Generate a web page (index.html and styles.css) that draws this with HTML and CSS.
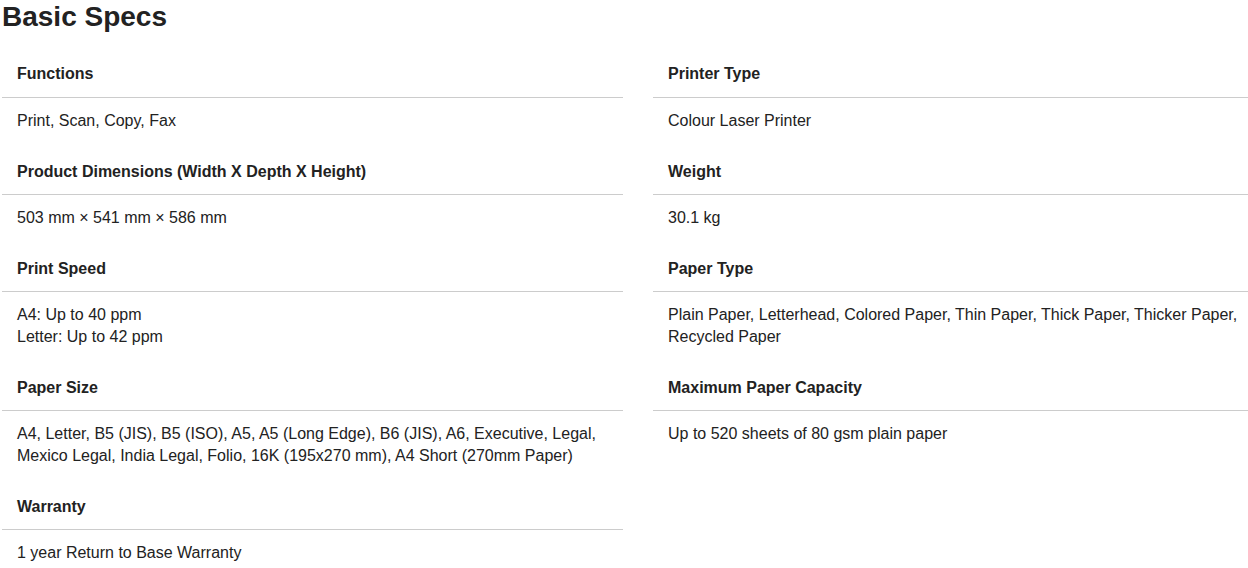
FILE: index.html
```html
<!DOCTYPE html>
<html lang="en">
<head>
<meta charset="utf-8">
<title>Basic Specs</title>
<link rel="stylesheet" href="styles.css">
</head>
<body>
<div class="page">
  <h2 class="title">Basic Specs</h2>
  <div class="specs">
    <div class="col">
      <div class="spec">
        <div class="label">Functions</div>
        <div class="value">Print, Scan, Copy, Fax</div>
      </div>
      <div class="spec">
        <div class="label">Product Dimensions (Width X Depth X Height)</div>
        <div class="value">503 mm × 541 mm × 586 mm</div>
      </div>
      <div class="spec">
        <div class="label">Print Speed</div>
        <div class="value">A4: Up to 40 ppm<br>Letter: Up to 42 ppm</div>
      </div>
      <div class="spec">
        <div class="label">Paper Size</div>
        <div class="value">A4, Letter, B5 (JIS), B5 (ISO), A5, A5 (Long Edge), B6 (JIS), A6, Executive, Legal, Mexico Legal, India Legal, Folio, 16K (195x270 mm), A4 Short (270mm Paper)</div>
      </div>
      <div class="spec">
        <div class="label">Warranty</div>
        <div class="value">1 year Return to Base Warranty</div>
      </div>
    </div>
    <div class="col">
      <div class="spec">
        <div class="label">Printer Type</div>
        <div class="value">Colour Laser Printer</div>
      </div>
      <div class="spec">
        <div class="label">Weight</div>
        <div class="value">30.1 kg</div>
      </div>
      <div class="spec">
        <div class="label">Paper Type</div>
        <div class="value">Plain Paper, Letterhead, Colored Paper, Thin Paper, Thick Paper, Thicker Paper, Recycled Paper</div>
      </div>
      <div class="spec">
        <div class="label">Maximum Paper Capacity</div>
        <div class="value">Up to 520 sheets of 80 gsm plain paper</div>
      </div>
    </div>
  </div>
</div>
</body>
</html>
```

FILE: styles.css
```css
html, body {
  margin: 0;
  padding: 0;
  background: #ffffff;
  overflow: hidden;
}

body {
  font-family: "Liberation Sans", Arial, sans-serif;
  color: #222222;
}

.page {
  padding-left: 2px;
  width: 1274px;
}

.title {
  margin: 0 0 14px 0;
  font-size: 28px;
  line-height: 34px;
  font-weight: 700;
  color: #222222;
}

.specs {
  display: grid;
  grid-template-columns: 621px 621px;
  column-gap: 30px;
  align-items: start;
}

.label {
  padding: 15px 14px 12px 15px;
  font-size: 16px;
  line-height: 22px;
  font-weight: 700;
  border-bottom: 1px solid #cccccc;
}

.spec + .spec .label {
  padding-top: 16px;
  padding-bottom: 11px;
}

.value {
  padding: 12px 14px 13px 15px;
  font-size: 16px;
  line-height: 22px;
}
```
